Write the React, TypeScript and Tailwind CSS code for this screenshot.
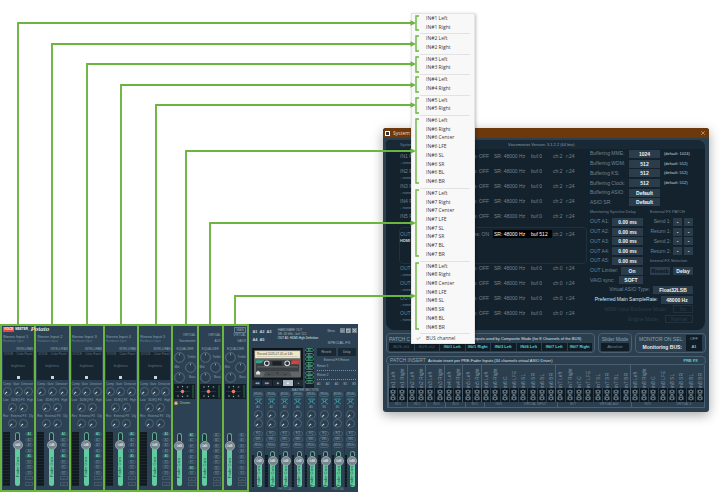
import { Check, Minus, Square, X } from "lucide-react";

const stereo = ["Left", "Right"];
const surround = ["Left", "Right", "Center", "LFE", "SL", "SR", "BL", "BR"];

const menuGroups = [1, 2, 3, 4, 5, 6, 7, 8].map((n) => ({
  input: n,
  channels: n < 6 ? stereo : surround,
}));

// x / y of each wire's corner, then the bracket it points at
const wires = [
  { x: 18, y: 23, from: 16, to: 30 },
  { x: 52, y: 44, from: 36, to: 51 },
  { x: 87, y: 64, from: 57, to: 72 },
  { x: 121, y: 85, from: 77, to: 92 },
  { x: 156, y: 105, from: 98, to: 113 },
  { x: 186, y: 151, from: 119, to: 183 },
  { x: 210, y: 223, from: 190, to: 256 },
  { x: 235, y: 296, from: 263, to: 329 },
];

const Wires = () => (
  <svg
    className="pointer-events-none absolute left-0 top-0 z-30"
    width="720"
    height="493"
    fill="none"
    stroke="#6cb440"
    strokeWidth="1.9"
    aria-hidden="true"
  >
    {wires.map((w) => (
      <g key={w.x}>
        <path d={`M${w.x} 325V${w.y}H412`} />
        <path d={`M410.5 ${w.y - 2.8}L416 ${w.y}L410.5 ${w.y + 2.8}Z`} fill="#6cb440" stroke="none" />
        <path d={`M419 ${w.from}H416V${w.to}H419`} strokeWidth="1.4" />
      </g>
    ))}
  </svg>
);

const ChannelMenu = () => (
  <div
    role="menu"
    className="absolute left-[411px] top-[13px] z-20 flex h-[331px] w-16 flex-col border border-[#e4e4e4] bg-[#f8f8f8] font-['Open_Sans',sans-serif] text-[5px] leading-none text-[#3a3a3a] shadow-[1px_1px_3px_rgba(0,0,0,0.25)]"
  >
    {menuGroups.map((group) => (
      <div key={group.input} className="contents">
        {group.channels.map((ch) => (
          <button
            key={ch}
            role="menuitem"
            className="min-h-0 flex-1 whitespace-nowrap pl-[14px] text-left"
          >
            IN#{group.input} {ch}
          </button>
        ))}
        <div className="ml-2 mr-1 h-[3px] shrink-0 border-b border-[#e2e2e2]" />
      </div>
    ))}
    <button
      role="menuitemradio"
      aria-checked="true"
      className="flex min-h-0 flex-1 items-center gap-[5px] whitespace-nowrap pl-1"
    >
      <Check size={5} /> BUS channel
    </button>
  </div>
);

/* ---------- mixer ---------- */

const Knob = ({ large }: { large?: boolean }) => (
  <svg
    viewBox="0 0 10 10"
    fill="none"
    className={`shrink-0 ${large ? "size-[11px]" : "size-[9px]"}`}
  >
    <circle cx="5" cy="5" r="4.4" fill="#2a3e4e" stroke="#58707f" strokeWidth="0.9" />
    {large ? (
      <path d="M5 1.500v1.500" stroke="#8fa3b1" strokeWidth="0.9" />
    ) : (
      <path d="M4.6 5.4L2.4 7.4" stroke="#d4dee4" strokeWidth="1.2" />
    )}
  </svg>
);

const Fader = ({ name, short }: { name: string; short?: boolean }) => (
  <label className="relative flex w-[10px] flex-col items-center">
    <input
      type="range"
      aria-label={name}
      defaultValue={75}
      className="absolute inset-0 h-full w-full opacity-0 [writing-mode:vertical-lr]"
    />
    <span
      className={`w-[5px] shrink-0 rounded-t-full border border-b-0 border-[#62a68e] bg-[#22333f] ${short ? "h-[5px]" : "h-2"}`}
    />
    <span className="z-10 -mb-px flex size-[10px] shrink-0 items-center justify-center rounded-full border border-[#95a5ad] bg-[#74858f] text-[3px] leading-none text-white">
      0dB
    </span>
    <span className="flex w-[5px] flex-1 items-center justify-center rounded-b-full bg-[#62cb9f] text-[4px] leading-none text-[#20473b]">
      <span className="rotate-180 whitespace-nowrap [writing-mode:vertical-rl]">Fader Gain</span>
    </span>
  </label>
);

const Meter = ({ wide }: { wide?: boolean }) => (
  <div
    className={`${wide ? "w-[7px]" : "mt-1 w-[3px]"} bg-[repeating-linear-gradient(#101a20_0_2px,#1b262b_2px_3px)]`}
  />
);

const busNames = ["A1", "A2", "A3", "A4", "A5", "B1", "B2", "B3"];

const BusButtons = ({ active }: { active: string[] }) => (
  <div className="flex w-2 flex-col justify-between">
    {busNames.map((bus) => (
      <button
        key={bus}
        className={`h-1 rounded-full border border-[#3f5767] text-[3px] leading-[2px] ${
          active.includes(bus) ? "bg-[#28594f] text-[#7ff0c8]" : "text-[#7890a0]"
        }`}
      >
        {bus}
      </button>
    ))}
    <button className="h-1 border border-[#435968] text-[2px] leading-[2px] text-[#6d8494]">M</button>
    <button className="h-1 border border-[#435968] text-[2px] leading-[2px] text-[#6d8494]">S</button>
  </div>
);

const SmallLabels = ({ items }: { items: string[] }) => (
  <div className="flex h-2 items-center justify-between whitespace-nowrap text-[3px] leading-none text-[#8b9eac]">
    {items.map((item) => (
      <span key={item}>{item}</span>
    ))}
  </div>
);

const StereoStrip = ({ n }: { n: number }) => (
  <section className="flex min-w-0 flex-col overflow-hidden border-l-2 border-[#6cb440] px-px pb-1">
    <div className="h-[26px] shrink-0 pt-2 text-[4px] leading-[5px] text-[#8fa4b3]">
      <h3 className="whitespace-nowrap">Stereo Input {n}</h3>
      <p className="whitespace-nowrap text-[3px] leading-[4px] text-[#627a8b]">Hardware Input</p>
      <p className="mt-1 text-right text-[3px] leading-[4px]">INTELLIPAN</p>
    </div>
    <div className="flex h-7 shrink-0 flex-col items-center justify-between bg-[#172530] p-px text-[3px] leading-[3px] text-[#5f7586]">
      <div className="flex w-full justify-between">
        <span>VOICE</span>
        <span>Color Panel</span>
      </div>
      <span>brightness</span>
      <span className="size-[3px] bg-[#c9d4da]" />
    </div>
    <SmallLabels items={["Comp", "Gate", "Denoiser"]} />
    <div className="-mt-px flex justify-between">
      <Knob />
      <Knob />
      <Knob />
    </div>
    <SmallLabels items={["Low", "3D/EQ FX", "High"]} />
    <div className="-mt-px flex justify-center gap-[2px]">
      <Knob />
      <Knob />
    </div>
    <SmallLabels items={["Rev", "External FX", "Dly"]} />
    <div className="-mt-px flex justify-center gap-[2px]">
      <Knob />
      <Knob />
    </div>
    <div className="mt-1 flex flex-1 justify-between">
      <Meter wide />
      <Fader name={`Stereo Input ${n} gain`} />
      <BusButtons active={["A1", "A5"]} />
    </div>
  </section>
);

const VirtualStrip = ({ title, app, last }: { title: string; app?: string; last?: boolean }) => (
  <section className="flex min-w-0 flex-col overflow-hidden border-l-2 border-[#6cb440] px-px pb-1">
    <div className="h-[26px] shrink-0 pt-px text-right text-[3px] leading-[4px] text-[#8fa4b3]">
      <p className="h-[6px]">{last && <button className="border border-[#647d8d] px-px">MAIN</button>}</p>
      <p className="h-[6px] whitespace-nowrap">VIRTUAL</p>
      <h3 className="whitespace-nowrap">{title}</h3>
      <p className="mt-1 text-center">EQUALIZER</p>
    </div>
    <div className="flex shrink-0 flex-col text-[3px] leading-none text-[#8b9eac]">
      <div className="flex items-center justify-between">
        <Knob large />
        <span>Treble</span>
      </div>
      <div className="-my-px flex items-center justify-between">
        <span>Mid</span>
        <Knob large />
      </div>
      <div className="flex items-center justify-between">
        <Knob large />
        <span>Bass</span>
      </div>
    </div>
    <svg viewBox="0 0 20 15" className="mt-px h-[15px] w-full shrink-0" preserveAspectRatio="none">
      <rect width="20" height="15" fill="#111d26" />
      <path d="M8 1v13M1 7.500h14" stroke="#31434f" strokeWidth="0.6" />
      <path d="M3 3h1.500M12 3h1.500M3 12h1.500M12 12h1.500M8 2v1M8 12v1" stroke="#9baab4" strokeWidth="1.2" />
      <circle cx="8" cy="7.500" r="1.700" fill="#e88066" />
      <rect x="17" y="1" width="2" height="13" fill="#1c4a35" />
    </svg>
    <div className="flex h-[34px] shrink-0 items-start gap-px pt-[2px] text-[3px] leading-[4px] text-[#a7c49b]">
      {app && (
        <>
          <svg width="4" height="4" viewBox="0 0 4 4" className="shrink-0">
            <circle cx="2" cy="2" r="2" fill="#d95740" />
            <path d="M0 2a2 2 0 0 0 4 0Z" fill="#73b944" />
            <circle cx="2" cy="2" r="0.8" fill="#fff" />
          </svg>
          <span className="whitespace-nowrap">{app}</span>
        </>
      )}
    </div>
    <div className="flex flex-1 justify-between">
      <Fader name={`${title} gain`} />
      <BusButtons active={app ? ["A1", "B2"] : []} />
    </div>
  </section>
);

const Cassette = () => (
  <svg viewBox="0 0 50 30" className="block w-full">
    <rect width="50" height="30" fill="#111418" />
    <rect x="2" y="2" width="46" height="27" rx="1" fill="#62676a" />
    <rect x="3" y="3" width="44" height="7" fill="#efe8c9" />
    <text x="5" y="6.500" fontSize="3" fill="#4a4538">Record 2023-07-05 at 14h</text>
    <path d="M5 8.400h40" stroke="#aaa188" strokeWidth="0.4" />
    <rect x="4" y="12" width="42" height="11" fill="#393f43" />
    <path d="M4 12h8l-3 3H4Z" fill="#37a38c" />
    <path d="M39 12h7v4h-8Z" fill="#c8473f" />
    <rect x="20" y="13" width="9" height="4" fill="#1c2124" />
    <circle cx="14.500" cy="15" r="2.300" fill="#2b3033" stroke="#d7dcde" />
    <circle cx="34.500" cy="15" r="2.300" fill="#2b3033" stroke="#d7dcde" />
    <path d="M5 18.500h40" stroke="#85898b" strokeWidth="0.6" />
    <path d="M11 28l2-5h24l2 5Z" fill="#4b5053" />
    <path d="M4 24l2-2 2 2v2H4Z" fill="#e2e6e8" />
    <path d="M16 26h1M32 26h1M24.500 24.500h1" stroke="#15191b" />
  </svg>
);

const transport = ["◀◀", "▶▶", "▶", "■", "●"];

const BusColumn = ({ name }: { name: string }) => (
  <div className="flex min-w-0 flex-1 flex-col items-center border-r border-[#243847] text-[3px] leading-none text-[#88a0af]">
    <button className="h-[5px] w-[10px] rounded-full border border-[#466071]">Mode</button>
    <svg width="9" height="7" viewBox="0 0 9 7" className="my-px" fill="none" stroke="#3f99a0" strokeWidth="0.8">
      <path d="M1 1l3 2M8 1L5 3M1 6l3-2M8 6L5 4M3 3.500h3M2 1h5" />
    </svg>
    <span className="h-[4px]">{name}</span>
    <Knob />
    <Knob />
    <div className="my-[3px] flex w-[10px] flex-col gap-px">
      <button className="h-[5px] rounded-sm border border-[#466071]">EQ</button>
      <button className="h-[5px] rounded-sm border border-[#466071]">SEL</button>
      <button className="h-[5px] rounded-sm border border-[#466071]">Mute</button>
    </div>
    <div className="flex w-full flex-1 justify-center">
      <Meter />
      <Fader name={`${name} gain`} short />
    </div>
  </div>
);

const MasterSection = () => (
  <section className="flex min-w-0 flex-1 flex-col overflow-hidden pl-[3px] pt-1 text-[3px] leading-[4px] text-[#9fb2bf]">
    <div className="flex h-5 shrink-0 justify-between pr-px">
      <div className="grid h-4 w-[20px] grid-cols-3 gap-px text-center">
        {["A1", "A2", "A3", "A4", "A5"].map((a) => (
          <button key={a} className="text-[4px] font-bold leading-none text-[#c3d0d9]">{a}</button>
        ))}
      </div>
      <div className="w-11 whitespace-nowrap">
        <p>HARDWARE OUT</p>
        <p>SR: 48 kHz - buf: 512</p>
        <p className="text-[#dde5ea]">OUT A1: HDMI-High Definition</p>
      </div>
      <div>
        <div className="flex items-center gap-px">
          <button className="mr-1">Menu</button>
          <button aria-label="Minimize" className="size-[5px] bg-[#71828d] text-white"><Minus size={4} /></button>
          <button aria-label="Maximize" className="size-[5px] bg-[#71828d] text-white"><Square size={4} /></button>
          <button aria-label="Close" className="size-[5px] bg-[#71828d] text-white"><X size={5} /></button>
        </div>
        <h3 className="mt-2 text-[4px]">SPECIAL FX</h3>
      </div>
    </div>
    <div className="flex h-10 shrink-0 gap-[2px]">
      <div className="w-[51px] shrink-0 overflow-hidden bg-[#111a21]">
        <Cassette />
        <div className="mt-px flex h-[6px] items-center gap-px">
          {transport.map((t) => (
            <button
              key={t}
              className={`h-full flex-1 ${t === "■" ? "bg-[#aebbc4] text-white" : "bg-[#1f2c36] text-[#9fb2bf]"}`}
            >
              {t}
            </button>
          ))}
        </div>
      </div>
      <div className="flex w-[9px] shrink-0 flex-col justify-between bg-[#15222b] pb-1">
        {busNames.map((b) => (
          <button key={b} className="h-1 rounded-full border border-[#397c5d] leading-[2px] text-[#69b897]">{b}</button>
        ))}
      </div>
      <div className="flex min-w-0 flex-1 flex-col gap-[2px] pl-px pr-[2px]">
        <div className="flex gap-[2px]">
          <button className="h-2 flex-1 bg-[#192833]">Reverb</button>
          <button className="h-2 flex-1 bg-[#192833]">Delay</button>
        </div>
        <p className="text-center">External FX Return</p>
        <p>Return 1</p>
        <div className="border-t border-dotted border-[#77909f]" />
        <p>Return 2</p>
        <div className="border-t border-dotted border-[#77909f]" />
        <div className="flex justify-between">
          {["A1", "A3", "A5", "B1", "B3"].map((b) => (
            <span key={b}>{b}</span>
          ))}
        </div>
      </div>
    </div>
    <h3 className="text-center">MASTER SECTION</h3>
    <div className="flex flex-1">
      {busNames.map((b) => (
        <BusColumn key={b} name={b} />
      ))}
    </div>
    <div className="flex h-[5px] shrink-0 text-center leading-[5px] text-[#6f8696]">
      <span className="flex-[5]">PHYSICAL</span>
      <span className="flex-[3]">VIRTUAL</span>
    </div>
  </section>
);

const Mixer = () => (
  <main className="absolute left-0 top-[324px] flex h-[168px] w-[358px] bg-[#2c4254]">
    <div className="grid w-[249px] shrink-0 grid-cols-[repeat(5,34fr)_repeat(3,25fr)] border-y-2 border-r-2 border-[#6cb440]">
      {[1, 2, 3, 4, 5].map((n) => (
        <StereoStrip key={n} n={n} />
      ))}
      <VirtualStrip title="Voicemeeter" app="Chrome" />
      <VirtualStrip title="AUX" />
      <VirtualStrip title="VAIO3" last />
    </div>
    <MasterSection />
    <h1 className="absolute left-[3px] top-[2px] flex items-center text-[3px] font-bold leading-[6px] text-white">
      <span className="bg-[#e5483d] px-px leading-[5px]">VOICE</span>
      <span className="px-px">MEETER_</span>
      <span className="font-['Liberation_Serif',serif] text-[7px] italic text-[#e8dfc3]">Potato</span>
    </h1>
  </main>
);

/* ---------- system settings ---------- */

type Device = { name: string; driver: string; state: string; buf: string; ch: string; on?: boolean };

const inputs: Device[] = [1, 2, 3, 4, 5].map((n) => ({
  name: `IN${n} P`, driver: "- none -", state: "OFF", buf: "buf:0", ch: "ch:2",
}));
const mainOut: Device[] = [
  { name: "OUT A1", driver: "HDMI", state: "ON", buf: "buf 512", ch: "ch:2", on: true },
];
const outputs: Device[] = [2, 3, 4, 5].map((n) => ({
  name: `OUT A${n}`, driver: "- none -", state: "OFF", buf: "buf:0", ch: "ch:0",
}));

const DeviceTable = ({ rows }: { rows: Device[] }) => (
  <table className="w-full table-fixed whitespace-nowrap text-left leading-[8px]">
    <tbody>
      {rows.map((d) => (
        <tr key={d.name} className="h-[15px] align-top">
          <td className="w-[66px] p-0">
            {d.name}
            <div className={`text-[4px] leading-[6px] ${d.on ? "font-bold text-[#c6d2da]" : ""}`}>{d.driver}</div>
          </td>
          <td className="w-[27px] p-0 pr-1 text-right">Res: {d.state}</td>
          <td className="w-[38px] p-0">
            <div className={`pl-px ${d.on ? "bg-black text-white" : ""}`}>SR: 48000 Hz</div>
          </td>
          <td className="w-[21px] p-0">
            <div className={d.on ? "bg-black text-white" : ""}>{d.buf}</div>
          </td>
          <td className="w-[13px] p-0 pl-px">{d.ch}</td>
          <td className="p-0 pl-px">r:24</td>
        </tr>
      ))}
    </tbody>
  </table>
);

const Value = ({ children, className = "w-[31px]" }: { children: string; className?: string }) => (
  <button className={`h-[8px] shrink-0 bg-[#2b3c4a] text-center font-bold leading-[8px] text-[#eef3f6] ${className}`}>
    {children}
  </button>
);

const row = "flex min-h-0 flex-1 items-center whitespace-nowrap";

const buffering = [
  ["Buffering MME:", "1024", "(default: 1024)"],
  ["Buffering WDM:", "512", "(default: 512)"],
  ["Buffering KS:", "512", "(default: 512)"],
  ["Buffering Clock:", "512", "(default: 512)"],
  ["Buffering ASIO:", "Default", ""],
  ["ASIO SR:", "Default", ""],
];

const Options = () => (
  <div className="flex min-w-0 flex-1 flex-col pr-3">
    <div className="flex flex-[6] flex-col">
      {buffering.map(([label, value, hint]) => (
        <div key={label} className={row}>
          <span className="w-[39px] shrink-0">{label}</span>
          <Value>{value}</Value>
          <span className="ml-1 text-[4px] text-[#c6d2da]">{hint}</span>
        </div>
      ))}
    </div>
    <div className="flex flex-[8] justify-between">
      <div className="flex w-[53px] flex-col">
        <div className={`${row} text-[4px]`}>Monitoring Synchro Delay</div>
        {["A1", "A2", "A3", "A4", "A5"].map((bus) => (
          <div key={bus} className={`${row} justify-between`}>
            OUT {bus}: <Value>0.00 ms</Value>
          </div>
        ))}
        <div className={`${row} justify-between`}>
          OUT Limiter: <Value className="w-[22px]">On</Value>
        </div>
        <div className={`${row} justify-between`}>
          VAIO sync: <Value className="w-[24px]">SOFT</Value>
        </div>
      </div>
      <div className="flex w-[43px] flex-col">
        <div className={`${row} text-[4px]`}>External FX PATCH</div>
        {["Send 1:", "Return 1:", "Send 2:", "Return 2:"].map((label) => (
          <div key={label} className={`${row} justify-end gap-[2px]`}>
            {label} <Value className="w-[9px]">-</Value>
            <Value className="w-[9px]">-</Value>
          </div>
        ))}
        <div className={`${row} text-[4px]`}>Internal FX Selection</div>
        <div className={`${row} justify-between`}>
          <button className="h-[8px] w-5 bg-[#2b3c4a] text-[5px] font-bold leading-[8px] text-[#0c151c]">Reverb</button>
          <Value className="w-5">Delay</Value>
        </div>
        <div className={row} />
      </div>
    </div>
    <div className="flex flex-[4] flex-col">
      <div className={`${row} justify-end gap-[3px]`}>
        Virtual ASIO Type: <Value className="w-10">Float32LSB</Value>
      </div>
      <div className={`${row} justify-end gap-[3px] text-[#dbe4ea]`}>
        Preferred Main SampleRate: <Value className="w-8">48000 Hz</Value>
      </div>
      <div className={`${row} justify-end gap-[6px] text-[#2d3f4c]`}>
        WDM Input Exclusive Mode:
        <button className="h-[8px] w-5 border border-[#21313d] leading-[6px]">No</button>
      </div>
      <div className={`${row} justify-end gap-[6px] text-[#2d3f4c]`}>
        Engine Mode:
        <button className="h-[8px] w-7 border border-[#21313d] leading-[6px]">Normal</button>
      </div>
    </div>
  </div>
);

const patches = ["BUS ch1", "BUS ch2", "IN#1 Left", "IN#1 Right", "IN#3 Left", "IN#6 Left", "IN#7 Left", "IN#7 Right"];

const inserts = [
  ...[1, 2, 3, 4, 5].flatMap((n) => stereo.map((ch) => `in${n} ${ch}`)),
  ...[6, 7, 8].flatMap((n) => surround.map((ch) => `in${n} ${ch === "Center" ? "C" : ch}`)),
];

const startsGroup = (i: number) => (i < 10 ? i % 2 === 0 : (i - 10) % 8 === 0);

const insertGroups = [
  ["IN#1"], ["IN#2"], ["IN#3"], ["IN#4"], ["IN#5"],
  ["IN#6", "VIRTUAL INPUT"], ["IN#7", "VIRTUAL AUX"], ["IN#8", "VIRTUAL 3"],
];

const frame = "rounded-sm border border-[#4a6072]";
const patchButton = "h-[8px] min-w-0 overflow-hidden whitespace-nowrap bg-[#101d27] text-[4px] leading-[8px]";

const SystemWindow = () => (
  <section className="absolute left-[383px] top-[128px] z-10 flex w-[326px] flex-col rounded-[3px] bg-[#2b3f4f] pb-1 text-[5px] leading-none text-[#6f8494] shadow-[0_3px_12px_rgba(0,0,0,0.35)]">
    <header className="flex h-[10px] items-center gap-[3px] rounded-t-[3px] bg-[#6c380c] px-[2px] text-[#e8ddd3]">
      <span className="flex size-[5px] border border-white bg-[#26353f]" />
      <h2 className="flex-1 font-['Open_Sans',sans-serif]">System a</h2>
      <button aria-label="Close" className="mr-px"><X size={6} /></button>
    </header>

    <div className="ml-[3px] mr-1 mt-[2px] flex flex-col rounded-lg rounded-tl-sm bg-[#13222d] pb-[6px]">
      <div className="flex h-[9px] items-center rounded-t-lg bg-[#182935] pl-[14px] text-[4px]">
        <span className="w-[108px]">System</span>
        <span className="text-[#8799a6]">Voicemeeter Version: 3.1.2.2 (64 bits)</span>
      </div>
      <div className="flex gap-1 pl-[14px]">
        <div className="w-[186px] shrink-0 pt-[3px]">
          <DeviceTable rows={inputs} />
          <div className="-mx-px h-[37px] rounded-sm border border-[#1f313d] pt-[2px]">
            <DeviceTable rows={mainOut} />
          </div>
          <DeviceTable rows={outputs} />
        </div>
        <Options />
      </div>
    </div>

    <div className="mx-[3px] mt-[3px] flex gap-[3px] text-[#8fa3b1]">
      <div className={`${frame} flex h-5 w-[209px] flex-col justify-between px-[2px] pb-px pt-[2px]`}>
        <div className="flex items-center whitespace-nowrap leading-[6px]">
          <span className="w-[85px] shrink-0">PATCH C</span>
          <span className="text-[4px] text-[#dbe4ea]">inputs used by Composite Mode (for 8 Channels of the BUS)</span>
        </div>
        <div className="grid grid-cols-8 gap-px">
          {patches.map((p, i) => (
            <button key={p} className={`${patchButton} ${i < 2 ? "text-[#536978]" : "font-bold text-[#5fd3d6]"}`}>
              {p}
            </button>
          ))}
        </div>
      </div>
      <div className={`${frame} flex h-5 w-[34px] flex-col items-center justify-between px-[2px] pb-px pt-[2px]`}>
        <span className="whitespace-nowrap leading-[6px]">Slider Mode</span>
        <button className={`${patchButton} w-full text-[#6f8494]`}>Absolute</button>
      </div>
      <div className={`${frame} flex h-5 flex-1 flex-col justify-between px-[3px] py-px`}>
        <div className="flex items-center justify-between">
          MONITOR ON SEL: <button className={`${patchButton} w-4 text-[#8fa3b1]`}>OFF</button>
        </div>
        <div className="flex items-center justify-end gap-1 font-bold text-[#e4ebef]">
          Monitoring BUS: <button className={`${patchButton} w-4 text-[#5fd3d6]`}>A1</button>
        </div>
      </div>
    </div>

    <div className={`${frame} mx-[3px] mt-[3px] flex h-[9px] items-center whitespace-nowrap px-[3px] text-[#8fa3b1]`}>
      <span className="w-[38px] shrink-0">PATCH INSERT</span>
      <span className="flex-1 text-[4px] text-[#dbe4ea]">
        Activate insert per PRE-Fader Inputs (34 channels virtual ASIO Driver)
      </span>
      <button className="pr-1 text-[4px] font-bold text-[#5fd3d6]">PRE FX</button>
    </div>
    <div className="mx-1 flex border-x border-[#4a6072]">
      {inserts.map((name, i) => (
        <div
          key={name}
          className={`flex min-w-0 flex-1 flex-col items-center border-l ${startsGroup(i) ? "border-[#4a6072]" : "border-transparent"}`}
        >
          <span className="flex h-[23px] rotate-180 items-center whitespace-nowrap leading-[6px] text-[#7f94a3] [writing-mode:vertical-rl]">
            {name}
          </span>
          <button aria-label={name} className="flex h-[14px] w-full items-center justify-center bg-[#0e1a23]">
            <svg width="6" height="12" viewBox="0 0 6 12" fill="none" stroke="#8ba0ad" strokeWidth="0.7">
              <circle cx="3" cy="2.500" r="1.500" />
              <circle cx="3" cy="9.500" r="1.500" />
              <path d="M1 1v3.500L3 6l2 1.500V11M5 1v3.500L3 6 1 7.500V11" />
            </svg>
          </button>
        </div>
      ))}
    </div>
    <div className="mx-1 flex h-[6px] border-x border-b border-[#4a6072] text-[3px] leading-[5px]">
      {insertGroups.map((labels) => (
        <div
          key={labels[0]}
          className={`flex min-w-0 basis-0 justify-around border-l border-[#4a6072] ${labels.length > 1 ? "grow-8" : "grow-2"}`}
        >
          {labels.map((l) => (
            <span key={l}>{l}</span>
          ))}
        </div>
      ))}
    </div>
  </section>
);

export default function App() {
  return (
    <div className="relative min-h-screen overflow-hidden bg-white font-['Liberation_Sans',sans-serif]">
      <Mixer />
      <SystemWindow />
      <ChannelMenu />
      <Wires />
    </div>
  );
}
